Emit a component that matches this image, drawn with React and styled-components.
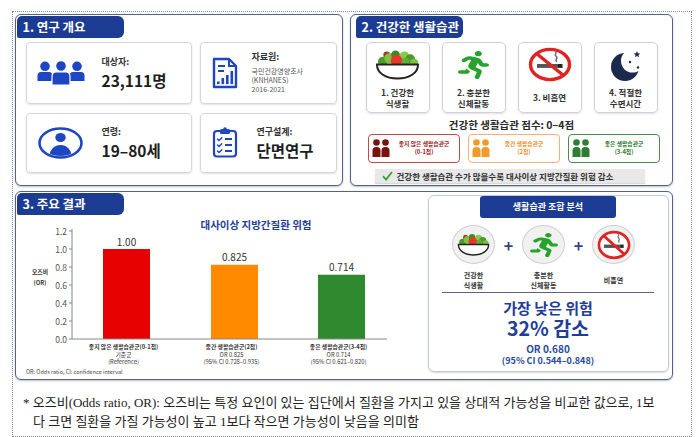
import React from 'react';
import styled, { createGlobalStyle } from 'styled-components';
import { FaRunning } from 'react-icons/fa';

const NAVY = '#1c3c93';
const BLUE = '#1e46c2';
const KR = `"Noto Sans CJK KR", "Noto Sans", sans-serif`;

const GlobalStyle = createGlobalStyle`
  html, body { margin: 0; padding: 0; background: #fff; }
  body { font-family: ${KR}; color: #222; }
  * { box-sizing: border-box; }
`;

const Frame = styled.div`
  margin: 11px 0 0 12px;
  width: 680px;
  height: 426px;
  border: 1px dotted #8a8a8a;
  overflow: hidden;
`;

const Sheet = styled.div`
  width: 660px;
  padding: 2px 0 0 2px;
  display: flex;
  flex-direction: column;
  gap: 5px;
`;

const TopRow = styled.div`
  display: grid;
  grid-template-columns: 328px 323px;
  column-gap: 7px;
`;

const Panel = styled.section`
  height: ${({ $h }) => $h}px;
  border: 1.5px solid #56608c;
  border-radius: 6px;
  box-shadow: 0 1px 2px rgba(30, 40, 80, 0.3);
  background: #fff;
`;

const Tab = styled.div`
  width: 107px;
  height: 22px;
  margin: 0.5px 0 0 ${({ $inset }) => $inset || 0.5}px;
  padding-left: 6px;
  background: ${NAVY};
  color: #fff;
  font-weight: 700;
  font-size: 12.5px;
  line-height: 22px;
  border-radius: 5px 6px 6px 2px;
  white-space: nowrap;
`;

/* 1. 연구 개요 */
const InfoGrid = styled.div`
  display: grid;
  grid-template-columns: 166px 137px;
  grid-template-rows: 62px 60px;
  gap: 9px 8px;
  margin: 4px 0 0 9.5px;
`;

const InfoCard = styled.div`
  display: flex;
  align-items: center;
  padding-left: ${({ $pad }) => $pad}px;
  gap: ${({ $gap }) => $gap}px;
  border: 1px solid #d3d6dd;
  border-radius: 4px;
  box-shadow: 0 1px 2px rgba(0, 0, 0, 0.12);
`;

const InfoLabel = styled.div`
  font-size: 9px;
  font-weight: 700;
  line-height: 12px;
  color: #333;
  white-space: nowrap;
`;

const InfoValue = styled.div`
  margin-top: 2px;
  font-size: 15.5px;
  font-weight: 700;
  line-height: 20px;
  color: #1e1e1e;
  white-space: nowrap;
`;

const SourceList = styled.div`
  margin-top: 4px;
  display: flex;
  flex-direction: column;
`;

const InfoSmall = styled.div`
  font-size: 7px;
  line-height: 8.7px;
  color: #555;
  white-space: nowrap;
`;

/* 2. 건강한 생활습관 */
const HabitRow = styled.div`
  display: flex;
  gap: 12px;
  margin: 4px 0 0 14.5px;
`;

const HabitCard = styled.div`
  width: 64px;
  height: 71px;
  padding-top: 4px;
  display: flex;
  flex-direction: column;
  align-items: center;
  border: 1px solid #cfd2d8;
  border-radius: 5px;
  box-shadow: 0 1px 2px rgba(0, 0, 0, 0.12);
`;

const HabitIcon = styled.div`
  height: 36px;
  display: flex;
  align-items: center;
  justify-content: center;
`;

const HabitLabel = styled.div`
  margin-top: 4px;
  height: 22px;
  display: flex;
  align-items: center;
  justify-content: center;
  text-align: center;
  font-size: 8.5px;
  font-weight: 700;
  line-height: 11px;
  color: #333;
  white-space: nowrap;
`;

const Score = styled.div`
  margin-top: 5px;
  text-align: center;
  font-size: 10.5px;
  font-weight: 700;
  line-height: 14px;
  color: #2a2a2a;
`;

const GroupRow = styled.div`
  display: flex;
  gap: 8px;
  margin: 2px 0 0 16.5px;
`;

const GroupBox = styled.div`
  width: 92px;
  height: 29px;
  display: flex;
  align-items: center;
  padding-left: 3px;
  border: 1px solid ${({ $line }) => $line};
  border-radius: 4px;
  color: ${({ $ink }) => $ink};
`;

const GroupText = styled.div`
  flex: 1;
  text-align: center;
  font-size: 5.8px;
  font-weight: 700;
  line-height: 8.5px;
  white-space: nowrap;
`;

const CheckBar = styled.div`
  width: 270px;
  height: 14px;
  margin: 6px 0 0 23.5px;
  padding-left: 7px;
  display: flex;
  align-items: center;
  gap: 4px;
  background: #e8e8e8;
  box-shadow: 0 1px 1px rgba(0, 0, 0, 0.15);
  font-size: 8.5px;
  font-weight: 700;
  line-height: 14px;
  color: #333;
  white-space: nowrap;
`;

/* 3. 주요 결과 */
const ResultBody = styled.div`
  display: flex;
  justify-content: space-between;
  align-items: flex-start;
  padding-right: 3.5px;
`;

const ChartColumn = styled.div`
  width: 403px;
`;

const ChartSvg = styled.svg`
  display: block;
  margin-top: 0.5px;
  font-family: ${KR};
`;

const ComboBox = styled.div`
  width: 241px;
  height: 177px;
  margin-top: 2.5px;
  display: flex;
  flex-direction: column;
  align-items: center;
  border: 1px solid #c5c9d2;
  border-radius: 6px;
  box-shadow: 0 1px 2px rgba(0, 0, 0, 0.15);
`;

const Pill = styled.div`
  width: 136px;
  height: 22px;
  background: ${NAVY};
  color: #fff;
  border-radius: 3px;
  text-align: center;
  font-size: 9px;
  font-weight: 700;
  line-height: 22px;
`;

const ComboRow = styled.div`
  align-self: flex-start;
  display: flex;
  align-items: flex-start;
  margin: 7.5px 0 0 20px;
`;

const ComboItem = styled.div`
  width: 50px;
  display: flex;
  flex-direction: column;
  align-items: center;
`;

const Bubble = styled.div`
  width: 43px;
  height: 39px;
  border-radius: 50%;
  background: #f1f1f1;
  border: 1px solid #d0d0d0;
  display: flex;
  align-items: center;
  justify-content: center;
`;

const ComboLabel = styled.div`
  margin-top: 5.5px;
  height: 20px;
  display: flex;
  align-items: center;
  justify-content: center;
  text-align: center;
  font-size: 7px;
  font-weight: 700;
  line-height: 10px;
  color: #333;
  white-space: nowrap;
`;

const Plus = styled.div`
  width: 20px;
  height: 39px;
  display: flex;
  align-items: center;
  justify-content: center;
  font-size: 16px;
  font-weight: 700;
  color: #34448a;
`;

const Divider = styled.div`
  width: 212px;
  margin-top: 2px;
  border-top: 1.5px solid #5d6384;
`;

const RiskTitle = styled.div`
  margin-top: 6px;
  font-size: 15px;
  font-weight: 700;
  line-height: 18px;
  color: #1f3d9a;
`;

const RiskBig = styled.div`
  font-size: 19.5px;
  font-weight: 700;
  line-height: 22px;
  color: #1f3d9a;
`;

const RiskOr = styled.div`
  margin-top: 4px;
  font-size: 10px;
  font-weight: 700;
  line-height: 12px;
  color: #2b4a9c;
`;

const RiskCi = styled.div`
  font-size: 9px;
  font-weight: 700;
  line-height: 12px;
  color: #2b4a9c;
`;

const Note = styled.div`
  margin-top: 13px;
  padding-left: 10px;
  font-family: "Liberation Serif", "Noto Sans CJK KR", serif;
  font-size: 13px;
  line-height: 19px;
  color: #222;
`;

const NoteLine = styled.div`
  white-space: nowrap;
  padding-left: ${({ $indent }) => ($indent ? 10 : 0)}px;
`;

const Runner = styled(FaRunning).attrs({ preserveAspectRatio: 'none' })`
  width: ${({ $w }) => $w}px;
  height: ${({ $h }) => $h}px;
  color: #25a32a;
`;

/* icons */
const PeopleIcon = () => (
  <svg width="48" height="24" viewBox="0 0 48 24">
    <g fill={BLUE}>
      <circle cx="8" cy="5.3" r="4.8" />
      <circle cx="40" cy="5.3" r="4.8" />
      <path d="M0.5 20 V14.5 Q0.5 11 4 11 H12 Q15.5 11 15.5 14.5 V20 Z" />
      <path d="M32.5 20 V14.5 Q32.5 11 36 11 H44 Q47.5 11 47.5 14.5 V20 Z" />
      <circle cx="24" cy="5" r="5.4" stroke="#fff" strokeWidth="1.2" />
      <path d="M15 24 V15.5 Q15 11 19 11 H29 Q33 11 33 15.5 V24 Z" stroke="#fff" strokeWidth="1.2" />
    </g>
  </svg>
);

const DocIcon = () => (
  <svg width="26" height="32" viewBox="0 0 26 32">
    <path d="M2 2 H17 L24 9 V30 H2 Z" fill="none" stroke={BLUE} strokeWidth="2.4" strokeLinejoin="round" />
    <path d="M17 2 V9 H24" fill="none" stroke={BLUE} strokeWidth="2" />
    <path d="M6 9 H13 M6 14 H12" stroke={BLUE} strokeWidth="2" />
    <g fill={BLUE}>
      <rect x="5" y="24.5" width="2.6" height="2.6" />
      <rect x="9.5" y="21" width="2.6" height="6.1" />
      <rect x="14" y="18" width="2.6" height="9.1" />
      <rect x="18.5" y="14" width="2.6" height="13.1" />
    </g>
  </svg>
);

const PersonCircleIcon = () => (
  <svg width="45" height="32" viewBox="0 0 45 32">
    <defs>
      <clipPath id="pcClip">
        <ellipse cx="22.5" cy="16" rx="19.5" ry="13" />
      </clipPath>
    </defs>
    <ellipse cx="22.5" cy="16" rx="21" ry="14.5" fill="none" stroke={BLUE} strokeWidth="2.6" />
    <g fill={BLUE} clipPath="url(#pcClip)">
      <ellipse cx="22.5" cy="10.5" rx="5.2" ry="4.6" />
      <ellipse cx="22.5" cy="29" rx="11" ry="11" />
    </g>
  </svg>
);

const ClipboardIcon = () => (
  <svg width="26" height="31" viewBox="0 0 26 31">
    <rect x="2" y="4" width="22" height="25.5" rx="3" fill="none" stroke={BLUE} strokeWidth="2.2" />
    <rect x="8" y="2" width="10" height="5" rx="1.5" fill={BLUE} />
    <circle cx="13" cy="2" r="1.8" fill={BLUE} />
    <g fill="none" stroke={BLUE} strokeWidth="1.5" strokeLinecap="round">
      <path d="M5.5 12 l1.5 1.5 l2.8 -2.8" />
      <path d="M5.5 18 l1.5 1.5 l2.8 -2.8" />
      <path d="M5.5 24 l1.5 1.5 l2.8 -2.8" />
    </g>
    <path d="M13 12 H20 M13 18 H20 M13 24 H20" stroke={BLUE} strokeWidth="1.8" />
  </svg>
);

const SaladIcon = ({ w, h }) => (
  <svg width={w} height={h} viewBox="0 0 46 32" preserveAspectRatio="none">
    <circle cx="8" cy="13" r="5" fill="#4e9a2e" />
    <circle cx="12" cy="6" r="3.5" fill="#a53a2c" />
    <circle cx="15" cy="9.5" r="5.5" fill="#7fc241" />
    <circle cx="21" cy="6" r="4.5" fill="#3d8a28" />
    <circle cx="30" cy="7.5" r="5" fill="#8cc84b" />
    <circle cx="36" cy="10.5" r="5" fill="#4c9a30" />
    <circle cx="40" cy="14" r="4" fill="#7fc241" />
    <circle cx="22" cy="12" r="6" fill="#e8372a" />
    <circle cx="31" cy="13" r="4" fill="#5fae36" />
    <path d="M2 16 H44 C44 25 35 30.5 23 30.5 C11 30.5 2 25 2 16 Z" fill="#fff" stroke="#222" strokeWidth="2" />
  </svg>
);

const NoSmokeIcon = ({ w, h }) => (
  <svg width={w} height={h} viewBox="0 0 44 36" preserveAspectRatio="none">
    <ellipse cx="22" cy="18" rx="19.5" ry="15.5" fill="#fff" stroke="#e02424" strokeWidth="3.4" />
    <rect x="9" y="17.5" width="21" height="4" fill="#555" />
    <rect x="30" y="17.5" width="4.5" height="4" fill="#222" />
    <path d="M29 15 c-3 -1.5 2 -3.5 -1 -5.5 c-2 -1.3 1 -3 -0.5 -4.5" fill="none" stroke="#666" strokeWidth="1.5" />
    <line x1="8.8" y1="7" x2="35.2" y2="29" stroke="#e02424" strokeWidth="3.4" />
  </svg>
);

const MoonIcon = () => (
  <svg width="30" height="34" viewBox="0 0 30 34">
    <defs>
      <mask id="moonCut">
        <rect x="0" y="0" width="30" height="34" fill="#fff" />
        <circle cx="21.5" cy="13" r="11.5" fill="#000" />
      </mask>
    </defs>
    <circle cx="14" cy="19" r="14" fill="#1b2a4c" mask="url(#moonCut)" />
    <path d="M26 3 l0.9 2.3 2.4 0.1 -1.9 1.5 0.7 2.4 -2.1 -1.4 -2.1 1.4 0.7 -2.4 -1.9 -1.5 2.4 -0.1 z" fill="#1b2a4c" />
    <circle cx="19" cy="14" r="1.2" fill="#1b2a4c" />
    <circle cx="27" cy="19.5" r="1.2" fill="#1b2a4c" />
  </svg>
);

const PairIcon = ({ color }) => (
  <svg width="18" height="20" viewBox="0 0 18 20">
    <g fill={color}>
      <circle cx="4.5" cy="4.5" r="3.3" />
      <circle cx="13.5" cy="4.5" r="3.3" />
      <path d="M0.5 19 V12.5 Q0.5 9 4 9 H5 Q8.5 9 8.5 12.5 V19 Z" />
      <path d="M9.5 19 V12.5 Q9.5 9 13 9 H14 Q17.5 9 17.5 12.5 V19 Z" />
    </g>
  </svg>
);

const CheckIcon = () => (
  <svg width="11" height="10" viewBox="0 0 11 10">
    <path d="M1 5.2 L4 8.5 L10 1" fill="none" stroke="#3aa03a" strokeWidth="1.8" />
  </svg>
);

const groups = [
  { line: '#c04a4a', ink: '#a01818', icon: '#7a1212', name: '좋지 않은 생활습관군', range: '(0-1점)' },
  { line: '#f3b078', ink: '#ef8f2a', icon: '#f39a2c', name: '중간 생활습관군', range: '(2점)' },
  { line: '#4f8a4f', ink: '#2a7a2a', icon: '#2e7d32', name: '좋은 생활습관군', range: '(3-4점)' },
];

const BASE = 124;
const SCALE = 90;
const BAR_W = 47;
const bars = [
  { v: 1.0, text: '1.00', color: '#e60000', x: 87, lines: ['좋지 않은 생활습관군(0-1점)', '기준군', '(Reference)'] },
  { v: 0.825, text: '0.825', color: '#ff8a00', x: 195, lines: ['중간 생활습관군(2점)', 'OR 0.825', '(95% CI 0.728–0.935)'] },
  { v: 0.714, text: '0.714', color: '#2f8a2f', x: 302, lines: ['좋은 생활습관군(3-4점)', 'OR 0.714', '(95% CI 0.621–0.820)'] },
];
const ticks = [0, 0.2, 0.4, 0.6, 0.8, 1.0, 1.2];

const RiskChart = () => (
  <ChartSvg width="403" height="162" viewBox="0 0 403 162">
    <text x="240" y="9" textAnchor="middle" dominantBaseline="central" fontSize="10.5" fontWeight="700" fill="#1f3d9a">
      대사이상 지방간질환 위험
    </text>
    <text x="24" y="56.5" textAnchor="middle" dominantBaseline="central" fontSize="5.8" fontWeight="700" fill="#333">오즈비</text>
    <text x="24" y="67" textAnchor="middle" dominantBaseline="central" fontSize="5.8" fontWeight="700" fill="#333">(OR)</text>
    {ticks.map((t) => {
      const y = BASE - t * SCALE;
      return (
        <g key={t}>
          <line x1="53" x2="56" y1={y} y2={y} stroke="#888" />
          <text x="51" y={y} textAnchor="end" dominantBaseline="central" fontSize="8.5" fill="#555">
            {t.toFixed(1)}
          </text>
        </g>
      );
    })}
    <line x1="56" x2="56" y1="14" y2={BASE} stroke="#888" />
    {bars.map((b) => {
      const h = b.v * SCALE;
      const cx = b.x + BAR_W / 2;
      return (
        <g key={b.text}>
          <rect x={b.x} y={BASE - h} width={BAR_W} height={h} fill={b.color} />
          <text x={cx} y={BASE - h - 8} textAnchor="middle" dominantBaseline="central" fontSize="10" fill="#333">
            {b.text}
          </text>
          {b.lines.map((l, i) => (
            <text
              key={l}
              x={cx - 3}
              y={131.5 + i * 7.5}
              textAnchor="middle"
              dominantBaseline="central"
              fontSize="5.8"
              fontWeight={i === 0 ? 700 : 400}
              fill="#333"
            >
              {l}
            </text>
          ))}
        </g>
      );
    })}
    <line x1="56" x2="371" y1={BASE} y2={BASE} stroke="#888" />
    <text x="10" y="157" dominantBaseline="central" fontSize="5.5" fill="#444">
      OR: Odds ratio, CI: confidence interval
    </text>
  </ChartSvg>
);

const App = () => (
  <>
    <GlobalStyle />
    <Frame>
      <Sheet>
        <TopRow>
          <Panel $h={172}>
            <Tab>1. 연구 개요</Tab>
            <InfoGrid>
              <InfoCard $pad={10} $gap={17}>
                <PeopleIcon />
                <div>
                  <InfoLabel>대상자:</InfoLabel>
                  <InfoValue>23,111명</InfoValue>
                </div>
              </InfoCard>
              <InfoCard $pad={11} $gap={14}>
                <DocIcon />
                <div>
                  <InfoLabel>자료원:</InfoLabel>
                  <SourceList>
                    <InfoSmall>국민건강영양조사</InfoSmall>
                    <InfoSmall>(KNHANES)</InfoSmall>
                    <InfoSmall>2016-2021</InfoSmall>
                  </SourceList>
                </div>
              </InfoCard>
              <InfoCard $pad={11} $gap={19}>
                <PersonCircleIcon />
                <div>
                  <InfoLabel>연령:</InfoLabel>
                  <InfoValue>19–80세</InfoValue>
                </div>
              </InfoCard>
              <InfoCard $pad={11} $gap={19}>
                <ClipboardIcon />
                <div>
                  <InfoLabel>연구설계:</InfoLabel>
                  <InfoValue>단면연구</InfoValue>
                </div>
              </InfoCard>
            </InfoGrid>
          </Panel>

          <Panel $h={172}>
            <Tab $inset={4.5}>2. 건강한 생활습관</Tab>
            <HabitRow>
              <HabitCard>
                <HabitIcon><SaladIcon w={45} h={31} /></HabitIcon>
                <HabitLabel>1. 건강한<br />식생활</HabitLabel>
              </HabitCard>
              <HabitCard>
                <HabitIcon><Runner $w={31} $h={28} /></HabitIcon>
                <HabitLabel>2. 충분한<br />신체활동</HabitLabel>
              </HabitCard>
              <HabitCard>
                <HabitIcon><NoSmokeIcon w={44} h={35} /></HabitIcon>
                <HabitLabel>3. 비흡연</HabitLabel>
              </HabitCard>
              <HabitCard>
                <HabitIcon><MoonIcon /></HabitIcon>
                <HabitLabel>4. 적절한<br />수면시간</HabitLabel>
              </HabitCard>
            </HabitRow>
            <Score>건강한 생활습관 점수: 0–4점</Score>
            <GroupRow>
              {groups.map((g) => (
                <GroupBox key={g.name} $line={g.line} $ink={g.ink}>
                  <PairIcon color={g.icon} />
                  <GroupText>{g.name}<br />{g.range}</GroupText>
                </GroupBox>
              ))}
            </GroupRow>
            <CheckBar>
              <CheckIcon />
              건강한 생활습관 수가 많을수록 대사이상 지방간질환 위험 감소
            </CheckBar>
          </Panel>
        </TopRow>

        <Panel $h={189}>
          <ResultBody>
            <ChartColumn>
              <Tab>3. 주요 결과</Tab>
              <RiskChart />
            </ChartColumn>
            <ComboBox>
              <Pill>생활습관 조합 분석</Pill>
              <ComboRow>
                <ComboItem>
                  <Bubble><SaladIcon w={33} h={23} /></Bubble>
                  <ComboLabel>건강한<br />식생활</ComboLabel>
                </ComboItem>
                <Plus>+</Plus>
                <ComboItem>
                  <Bubble><Runner $w={28} $h={24} /></Bubble>
                  <ComboLabel>충분한<br />신체활동</ComboLabel>
                </ComboItem>
                <Plus>+</Plus>
                <ComboItem>
                  <Bubble><NoSmokeIcon w={34} h={30} /></Bubble>
                  <ComboLabel>비흡연</ComboLabel>
                </ComboItem>
              </ComboRow>
              <Divider />
              <RiskTitle>가장 낮은 위험</RiskTitle>
              <RiskBig>32% 감소</RiskBig>
              <RiskOr>OR 0.680</RiskOr>
              <RiskCi>(95% CI 0.544–0.848)</RiskCi>
            </ComboBox>
          </ResultBody>
        </Panel>
      </Sheet>

      <Note>
        <NoteLine>* 오즈비(Odds ratio, OR): 오즈비는 특정 요인이 있는 집단에서 질환을 가지고 있을 상대적 가능성을 비교한 값으로, 1보</NoteLine>
        <NoteLine $indent>다 크면 질환을 가질 가능성이 높고 1보다 작으면 가능성이 낮음을 의미함</NoteLine>
      </Note>
    </Frame>
  </>
);

export default App;
